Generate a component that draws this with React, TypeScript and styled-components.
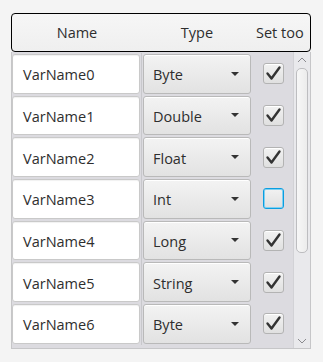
import styled, { createGlobalStyle } from 'styled-components';

const Global = createGlobalStyle`
  html, body { margin: 0; background: #f4f4f4; }
  body { font-family: "Open Sans", "DejaVu Sans", sans-serif; color: #333; }
`;

const ROW_H = 41.67;

const rows = [
  { name: 'VarName0', type: 'Byte', on: true },
  { name: 'VarName1', type: 'Double', on: true },
  { name: 'VarName2', type: 'Float', on: true },
  { name: 'VarName3', type: 'Int', on: false, focused: true },
  { name: 'VarName4', type: 'Long', on: true },
  { name: 'VarName5', type: 'String', on: true },
  { name: 'VarName6', type: 'Byte', on: true },
];

const Page = styled.div`
  padding: 13px 0 0 11px;
  height: 362px;
  box-sizing: border-box;
`;

const Table = styled.div`
  width: 300px;
`;

const Header = styled.div`
  height: 39px;
  box-sizing: border-box;
  border: 1px solid #000;
  border-radius: 4px;
  background: linear-gradient(#f6f6f6, #efefef);
  display: grid;
  grid-template-columns: 130px 110px 1fr;
  overflow: hidden;
`;

const HeadCell = styled.div<{ $left?: boolean }>`
  display: flex;
  align-items: center;
  justify-content: ${p => (p.$left ? 'flex-start' : 'center')};
  padding-left: ${p => (p.$left ? '4px' : '0')};
  font-size: 14.5px;
  white-space: nowrap;
  overflow: hidden;
  color: #2e2e2e;
`;

const Body = styled.div`
  height: 297px;
  box-sizing: border-box;
  border: 1px solid #c6c6c8;
  border-top: none;
  background: #dcdbe0;
  display: flex;
  overflow: hidden;
`;

const Rows = styled.div`
  flex: 1;
  padding-top: 1px;
`;

const Row = styled.div`
  display: grid;
  grid-template-columns: 130px 110px 41px;
  height: ${ROW_H}px;
`;

const NameCell = styled.div`
  padding: 1px 1px 1px 0;
  border-right: 1px solid #c8c8cc;
  box-sizing: border-box;
`;

const Field = styled.div`
  height: 100%;
  box-sizing: border-box;
  background: #fff;
  border: 1px solid #c9c9c9;
  border-radius: 3px;
  box-shadow: inset 0 1px 1px rgba(0, 0, 0, 0.06);
  display: flex;
  align-items: center;
  padding: 2px 0 0 10px;
  font-size: 14.5px;
  color: #2e2e2e;
`;

const TypeCell = styled.div`
  padding: 1px;
  box-sizing: border-box;
`;

const Combo = styled.div`
  height: 100%;
  box-sizing: border-box;
  border: 1px solid #b9b9b9;
  border-radius: 3px;
  background: linear-gradient(#f3f3f3, #e2e2e2);
  box-shadow: inset 0 1px 0 #fff;
  display: flex;
  align-items: center;
  justify-content: space-between;
  padding: 2px 11px 0 9px;
  font-size: 14.5px;
  color: #2e2e2e;
`;

const Arrow = styled.span`
  width: 0;
  height: 0;
  border-left: 4px solid transparent;
  border-right: 4px solid transparent;
  border-top: 4px solid #333;
  margin-top: -2px;
`;

const CheckCell = styled.div`
  display: flex;
  align-items: center;
  justify-content: center;
  padding-left: 1px;
`;

const Box = styled.div<{ $focused?: boolean }>`
  width: 21px;
  height: 21px;
  box-sizing: border-box;
  border-radius: 3px;
  border: 1px solid ${p => (p.$focused ? '#0a9ee0' : '#b3b3b3')};
  box-shadow: ${p => (p.$focused ? 'inset 0 0 0 1px #7fd0f2' : 'inset 0 1px 0 #fff')};
  background: linear-gradient(#f2f2f2, #e0e0e0);
  display: flex;
  align-items: center;
  justify-content: center;
`;

const Scroll = styled.div`
  width: 17px;
  background: #e9e9ec;
  border-left: 1px solid #d2d2d6;
  box-sizing: border-box;
  display: flex;
  flex-direction: column;
  align-items: center;
`;

const ArrowBtn = styled.div<{ $bottom?: boolean }>`
  height: 15px;
  width: 100%;
  margin-top: ${p => (p.$bottom ? 'auto' : '0')};
  display: flex;
  align-items: center;
  justify-content: center;
`;

const Track = styled.div`
  flex: 1;
  width: 100%;
  padding: 1px 2px 0 2px;
  box-sizing: border-box;
`;

const Thumb = styled.div`
  height: 185px;
  border: 1px solid #bdbdc0;
  border-radius: 5px;
  background: linear-gradient(90deg, #f7f7f7, #ececec);
  box-sizing: border-box;
`;

const Check = () => (
  <svg width="17" height="17" viewBox="0 0 17 17">
    <path d="M2.5 8.5 L6.5 13.5 L14.5 2.5" fill="none" stroke="#333" strokeWidth="2.4" strokeLinecap="round" strokeLinejoin="round" />
  </svg>
);

const Chevron = ({ up }: { up?: boolean }) => (
  <svg width="10" height="6" viewBox="0 0 10 6">
    <path d={up ? 'M1 5 L5 1 L9 5' : 'M1 1 L5 5 L9 1'} fill="none" stroke="#8a8a8e" strokeWidth="1" />
  </svg>
);

export default function App() {
  return (
    <Page>
      <Global />
      <Table>
        <Header>
          <HeadCell>Name</HeadCell>
          <HeadCell>Type</HeadCell>
          <HeadCell $left>Set too</HeadCell>
        </Header>
        <Body>
          <Rows>
            {rows.map(r => (
              <Row key={r.name}>
                <NameCell>
                  <Field>{r.name}</Field>
                </NameCell>
                <TypeCell>
                  <Combo>
                    {r.type}
                    <Arrow />
                  </Combo>
                </TypeCell>
                <CheckCell>
                  <Box $focused={r.focused}>{r.on && <Check />}</Box>
                </CheckCell>
              </Row>
            ))}
          </Rows>
          <Scroll>
            <ArrowBtn><Chevron up /></ArrowBtn>
            <Track><Thumb /></Track>
            <ArrowBtn $bottom><Chevron /></ArrowBtn>
          </Scroll>
        </Body>
      </Table>
    </Page>
  );
}
